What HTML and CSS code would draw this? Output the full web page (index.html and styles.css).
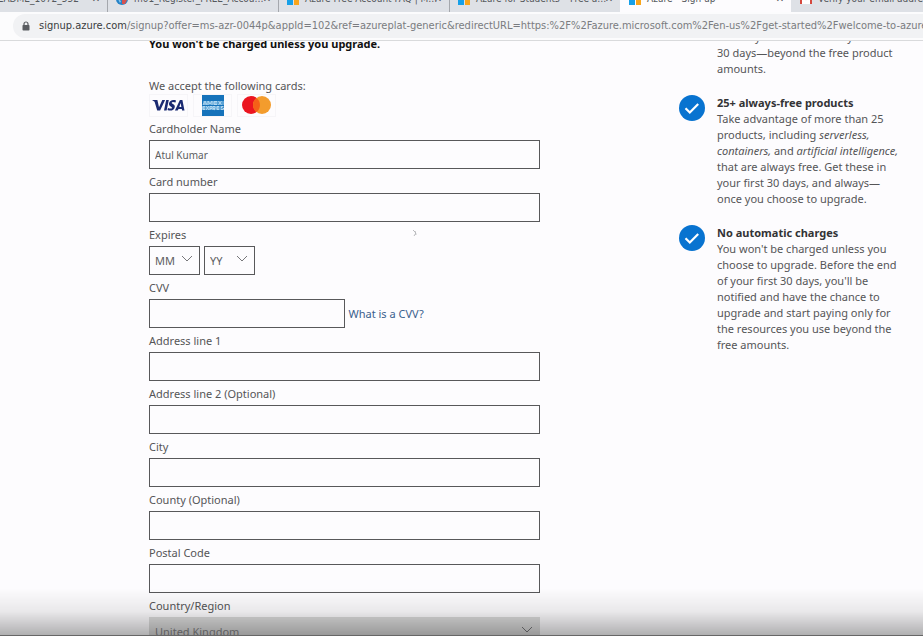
FILE: index.html
```html
<!DOCTYPE html>
<html lang="en">
<head>
<meta charset="utf-8">
<meta name="viewport" content="width=device-width, initial-scale=1">
<title>Azure - Sign up</title>
<link rel="stylesheet" href="styles.css">
</head>
<body>
<header class="browser">
  <nav class="tabs" aria-label="Open tabs">
    <div class="tab tab-cut"><span class="tab-title">README_1072_552</span><button class="tab-close" aria-label="Close tab">✕</button></div>
    <div class="tab">
      <svg class="favicon" viewBox="0 0 12 12"><circle cx="6" cy="6" r="6" fill="#2583c7"/><path d="M6 7h5l-2 4H6z" fill="#d4524f"/><path d="M2 6l3 2-1 2z" fill="#8ecbf0"/></svg>
      <span class="tab-title">m01_Register_FREE_Accou…</span><button class="tab-close" aria-label="Close tab">✕</button>
    </div>
    <div class="tab">
      <svg class="favicon" viewBox="0 0 12 12"><path d="M0 0h6v6H0z" fill="#f25022"/><path d="M6 0h6v6H6z" fill="#7fba00"/><path d="M0 6h6v6H0z" fill="#16a0e8"/><path d="M7 6h5v6H7z" fill="#f9a51a"/></svg>
      <span class="tab-title">Azure Free Account FAQ | M…</span><button class="tab-close" aria-label="Close tab">✕</button>
    </div>
    <div class="tab">
      <svg class="favicon" viewBox="0 0 12 12"><path d="M0 0h6v6H0z" fill="#f25022"/><path d="M6 0h6v6H6z" fill="#7fba00"/><path d="M0 6h6v6H0z" fill="#16a0e8"/><path d="M7 6h5v6H7z" fill="#f9a51a"/></svg>
      <span class="tab-title">Azure for Students – Free a…</span><button class="tab-close" aria-label="Close tab">✕</button>
    </div>
    <div class="tab tab-active">
      <svg class="favicon" viewBox="0 0 12 12"><path d="M0 0h6v6H0z" fill="#f25022"/><path d="M6 0h6v6H6z" fill="#7fba00"/><path d="M0 6h6v6H0z" fill="#16a0e8"/><path d="M7 6h5v6H7z" fill="#f9a51a"/></svg>
      <span class="tab-title">Azure - Sign up</span><button class="tab-close" aria-label="Close tab">✕</button>
    </div>
    <div class="tab">
      <svg class="favicon" viewBox="0 0 12 12"><path d="M1 11V2l5 4 5-4v9" fill="#fff" stroke="#d5483d" stroke-width="2"/></svg>
      <span class="tab-title">Verify your email address</span>
    </div>
  </nav>
  <div class="toolbar">
    <div class="address">
      <svg class="lock" viewBox="0 0 8 10"><path d="M2 4V3a2 2 0 0 1 4 0v1" fill="none" stroke="#5a5d61" stroke-width="1.2"/><rect x="0.5" y="4" width="7" height="5.5" rx="0.8" fill="#5a5d61"/></svg>
      <span class="url"><span class="host">signup.azure.com</span>/signup?offer=ms-azr-0044p&amp;appId=102&amp;ref=azureplat-generic&amp;redirectURL=https:%2F%2Fazure.microsoft.com%2Fen-us%2Fget-started%2Fwelcome-to-azure%</span>
    </div>
  </div>
</header>

<main class="page">
  <form class="payment">
    <p class="notice">You won't be charged unless you upgrade.</p>
    <p class="accept">We accept the following cards:</p>
    <div class="cards">
      <svg class="card" viewBox="0 0 39 23" role="img" aria-label="Visa"><g fill="#1a2a72"><path d="M3 6h5.400l1.600 7.200L13.300 6h2.800l-5 10.500H8.200L5.600 7.700z"/><path d="M17.200 6h2.600l-2.200 10.500H15z"/><path d="M27 6.500l-.5 2c-2.100-.8-3.700-.7-3.800.2 0 1.200 3.500 1.500 3.100 4.300-.4 3.400-4.200 4.300-7.300 3.100l.5-2.200c2 1 3.800.9 4 0 .2-1.400-3.400-1.400-3-4.400.5-3 3.800-4.300 7-3z"/><path fill-rule="evenodd" d="M30.900 6h2.500l2.100 10.500h-2.400l-.3-1.500h-3.300l-.8 1.500h-2.800zM31.600 9l-1.300 4h2.100z"/></g></svg>
      <svg class="card" viewBox="0 0 39 23" role="img" aria-label="American Express"><rect x="9" y="0" width="22" height="22" fill="#1673bb"/><path d="M10 7h21v4H10zM9 12h20v4H9z" fill="#5ba3d6"/><g fill="none" stroke="#b4d8f0" stroke-width="1"><path d="M10 11l2-4 2 4m-3-1h2M15 11V7l2 3 2-3v4M24 7.500h-3v3h3m-3-1.500h3M25.500 7l3 4m0-4l-3 4M12 12.500h-2v3h2m-2-1.500h2M13 12l3 4m0-4l-3 4M17 16v-3.500h2v2h-2M20 16v-3.500h2v2h-2l2 1.500M26 12.500h-2v3h2m-2-1.500h2M30.500 12.500h-2v1.500h2v1.500h-2.500"/></g></svg>
      <svg class="card" viewBox="0 0 39 23" role="img" aria-label="Mastercard"><circle cx="14" cy="11" r="9" fill="#eb1520"/><circle cx="25" cy="11" r="9" fill="#f39c2d"/><path d="M19.500 3.900a9 9 0 0 1 0 14.200a9 9 0 0 1 0-14.200z" fill="#f56018"/></svg>
    </div>

    <div class="field"><label for="holder">Cardholder Name</label><input id="holder" type="text" value="Atul Kumar"></div>
    <div class="field"><label for="number">Card number</label><input id="number" type="text"></div>
    <div class="field">
      <label for="month">Expires</label>
      <div class="row">
        <div class="select"><select id="month"><option>MM</option></select><svg class="chevron" viewBox="0 0 12 6"><path d="M1 0l5 5 5-5"/></svg></div>
        <div class="select"><select aria-label="Expiry year"><option>YY</option></select><svg class="chevron" viewBox="0 0 12 6"><path d="M1 0l5 5 5-5"/></svg></div>
      </div>
    </div>
    <div class="field">
      <label for="cvv">CVV</label>
      <div class="row"><input id="cvv" class="half" type="text"><a href="#">What is a CVV?</a></div>
    </div>
    <div class="field"><label for="line1">Address line 1</label><input id="line1" type="text"></div>
    <div class="field"><label for="line2">Address line 2 (Optional)</label><input id="line2" type="text"></div>
    <div class="field"><label for="city">City</label><input id="city" type="text"></div>
    <div class="field"><label for="county">County (Optional)</label><input id="county" type="text"></div>
    <div class="field"><label for="postal">Postal Code</label><input id="postal" type="text"></div>
    <div class="field">
      <label for="country">Country/Region</label>
      <div class="select select-wide"><select id="country" disabled><option>United Kingdom</option></select><svg class="chevron" viewBox="0 0 12 6"><path d="M1 0l5 5 5-5"/></svg></div>
    </div>
  </form>

  <aside class="benefits">
    <section class="benefit">
      <div class="mark"></div>
      <p>with any Azure service in your first<br>30 days—beyond the free product<br>amounts.</p>
    </section>
    <section class="benefit">
      <svg class="mark" viewBox="0 0 26 26"><circle cx="13" cy="13" r="13" fill="#0873d0"/><path d="M6.500 13.300l4.300 4.200 8.400-8.500" fill="none" stroke="#fff" stroke-width="2.200"/></svg>
      <div><h2>25+ always-free products</h2>
      <p>Take advantage of more than 25<br>products, including <em>serverless,<br>containers,</em> and <em>artificial intelligence,</em><br>that are always free. Get these in<br>your first 30 days, and always—<br>once you choose to upgrade.</p></div>
    </section>
    <section class="benefit">
      <svg class="mark" viewBox="0 0 26 26"><circle cx="13" cy="13" r="13" fill="#0873d0"/><path d="M6.500 13.300l4.300 4.200 8.400-8.500" fill="none" stroke="#fff" stroke-width="2.200"/></svg>
      <div><h2>No automatic charges</h2>
      <p>You won't be charged unless you<br>choose to upgrade. Before the end<br>of your first 30 days, you'll be<br>notified and have the chance to<br>upgrade and start paying only for<br>the resources you use beyond the<br>free amounts.</p></div>
    </section>
  </aside>

  <svg class="pointer" viewBox="0 0 6 8"><path d="M1 1l3 3M4 4L2 7M3 2l1 4" fill="none" stroke="#b9babd"/></svg>
</main>
<div class="shade"></div>
</body>
</html>
```
FILE: styles.css
```css
* { box-sizing: border-box; }

body {
  margin: 0;
  height: 100vh;
  overflow: hidden;
  display: flex;
  flex-direction: column;
  background: #fdfcfe;
  color: #555557;
  font: 11px/16px "Noto Sans", "Open Sans", sans-serif;
}

p, h2 { margin: 0; }

/* Browser chrome */
.browser {
  flex: none;
  border-bottom: 1px solid #d9dadc;
  font-family: "DejaVu Sans Condensed", "Noto Sans", sans-serif;
}

.tabs {
  display: flex;
  height: 12px;
  overflow: hidden;
  background: #dee1e6;
}

.tab {
  flex: none;
  display: flex;
  align-items: flex-end;
  gap: 6px;
  width: 171px;
  height: 12px;
  padding: 0 5px 5px 8px;
  border-left: 1px solid transparent;
  font-size: 10px;
  color: #55585c;
}

.tab + .tab { border-left-color: #a5a8ad; }
.tab-cut { width: 107px; padding-left: 0; }
.tab-cut .tab-title { display: flex; justify-content: flex-end; padding-right: 5px; }
.tab.tab-active, .tab.tab-active + .tab { border-color: transparent; }
.tab-active { background: #fdfcfe; }
.favicon { flex: none; width: 12px; height: 12px; margin-bottom: 2px; }
.tab-title { flex: 1; min-width: 0; white-space: nowrap; }

.tab-close {
  flex: none;
  width: 12px;
  margin: 0;
  padding: 0;
  border: 0;
  background: none;
  color: #55585c;
  font: 10px/16px "DejaVu Sans", sans-serif;
}

.toolbar {
  height: 28px;
  padding: 2px 0 2px 13px;
  background: #fcfcfd;
}

.address {
  display: flex;
  align-items: center;
  gap: 9px;
  height: 24px;
  padding-left: 9px;
  border-radius: 12px 0 0 12px;
  background: #f1f2f4;
  overflow: hidden;
}

.lock { flex: none; width: 8px; height: 10px; }
.url { white-space: nowrap; color: #7a7c80; font-size: 11px; }
.host { color: #3a3c40; }

/* Page */
.page {
  position: relative;
  flex: 1;
  min-height: 0;
  overflow: hidden;
  display: grid;
  grid-template-columns: 391fr 244fr;
  column-gap: 139px;
  align-items: start;
  padding-left: 149px;
}

.payment { margin-top: -5px; }
.notice { margin-bottom: 26px; color: #111; font-weight: 700; }
.cards { display: flex; gap: 5px; margin-bottom: 4px; }
.card { width: 39px; height: 23px; outline: 1px solid #f6f5f8; outline-offset: -1px; }

.field { margin-bottom: 5px; }
.field label { display: block; margin-bottom: 3px; }

.field input, .field select {
  display: block;
  width: 100%;
  height: 29px;
  margin: 0;
  padding: 0 5px;
  border: 1px solid #58585a;
  border-radius: 0;
  background: #fdfcfe;
  color: #5c5c5e;
  font: 10px/16px "Noto Sans", "Open Sans", sans-serif;
}

.row { display: flex; align-items: center; gap: 4px; }
.field input.half { width: 50%; }
.row a { color: #3a608d; text-decoration: none; }

.select { position: relative; width: 51px; }
.field select { appearance: none; font-size: 11px; opacity: 1; }
.select-wide { width: 100%; }
.select-wide select { border-color: #dcdcdc; background: #dcdcdc; color: #858587; }

.chevron {
  position: absolute;
  top: 10px;
  right: 7px;
  width: 12px;
  height: 6px;
  fill: none;
  stroke: #77777a;
  pointer-events: none;
}

.benefits {
  display: grid;
  gap: 18px;
  margin-top: -12px;
}

.benefit {
  display: grid;
  grid-template-columns: 26px 1fr;
  column-gap: 12px;
  white-space: nowrap;
}

.mark { width: 26px; height: 26px; }
.benefit h2 { color: #333335; font-size: 11px; line-height: 16px; }

.pointer {
  position: absolute;
  left: 412px;
  top: 188px;
  width: 6px;
  height: 8px;
}

/* Fade along the lower edge of the window */
.shade {
  position: fixed;
  inset: auto 0 0 0;
  height: 48px;
  border-bottom: 1px solid #666;
  background: linear-gradient(to bottom, rgba(0, 0, 0, 0), rgba(0, 0, 0, 0.08) 50%, rgba(0, 0, 0, 0.3));
  pointer-events: none;
}
```
